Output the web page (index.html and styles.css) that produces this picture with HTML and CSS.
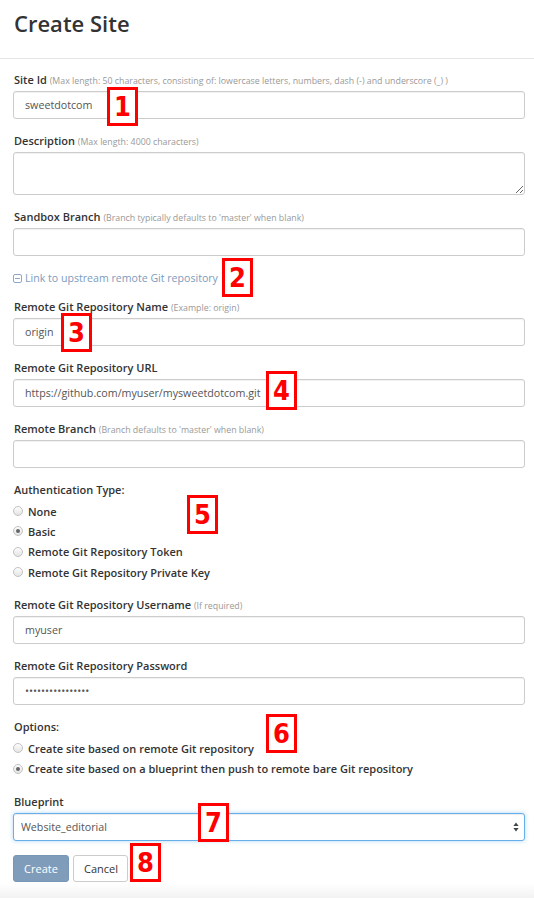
FILE: index.html
```html
<!DOCTYPE html>
<html>
<head>
<meta charset="utf-8">
<link rel="stylesheet" href="styles.css">
</head>
<body>
<div class="page">
  <header class="header"><h1 class="title">Create Site</h1></header>
  <form class="form">
    <div class="field">
      <div class="label">Site Id <span class="hint">(Max length: 50 characters, consisting of: lowercase letters, numbers, dash (-) and underscore (_) )</span></div>
      <input class="input" type="text" value="sweetdotcom">
    </div>
    <div class="field">
      <div class="label">Description <span class="hint">(Max length: 4000 characters)</span></div>
      <textarea class="input textarea"></textarea>
    </div>
    <div class="field">
      <div class="label">Sandbox Branch <span class="hint">(Branch typically defaults to 'master' when blank)</span></div>
      <input class="input" type="text" value="">
    </div>
    <div class="link-row">
      <svg class="link-icon" width="9" height="9" viewBox="0 0 9 9"><rect x="0.5" y="0.5" width="8" height="8" rx="1.5" fill="none" stroke="currentColor"/><line x1="2" y1="4.5" x2="7" y2="4.5" stroke="currentColor"/></svg>
      <span>Link to upstream remote Git repository</span>
    </div>
    <div class="field">
      <div class="label">Remote Git Repository Name <span class="hint">(Example: origin)</span></div>
      <input class="input" type="text" value="origin">
    </div>
    <div class="field">
      <div class="label">Remote Git Repository URL</div>
      <input class="input" type="text" value="https://github.com/myuser/mysweetdotcom.git">
    </div>
    <div class="field">
      <div class="label">Remote Branch <span class="hint">(Branch defaults to 'master' when blank)</span></div>
      <input class="input" type="text" value="">
    </div>
    <div class="field field-radios">
      <div class="label">Authentication Type:</div>
      <div class="radios">
        <label class="radio"><input type="radio" name="auth"><span>None</span></label>
        <label class="radio"><input type="radio" name="auth" checked><span>Basic</span></label>
        <label class="radio"><input type="radio" name="auth"><span>Remote Git Repository Token</span></label>
        <label class="radio"><input type="radio" name="auth"><span>Remote Git Repository Private Key</span></label>
      </div>
    </div>
    <div class="field">
      <div class="label">Remote Git Repository Username <span class="hint">(If required)</span></div>
      <input class="input" type="text" value="myuser">
    </div>
    <div class="field">
      <div class="label">Remote Git Repository Password</div>
      <input class="input" type="password" value="abcdefghijklmnop">
    </div>
    <div class="field field-radios">
      <div class="label">Options:</div>
      <div class="radios">
        <label class="radio"><input type="radio" name="opt"><span>Create site based on remote Git repository</span></label>
        <label class="radio"><input type="radio" name="opt" checked><span>Create site based on a blueprint then push to remote bare Git repository</span></label>
      </div>
    </div>
    <div class="field">
      <div class="label">Blueprint</div>
      <div class="select-wrap">
        <select class="input select"><option>Website_editorial</option></select>
        <svg class="select-arrows" width="6" height="10" viewBox="0 0 6 10"><path d="M3 0.5 L5.6 4 H0.4 Z M3 9.5 L5.6 6 H0.4 Z" fill="#444"/></svg>
      </div>
    </div>
    <div class="actions">
      <button type="button" class="btn btn-primary">Create</button>
      <button type="button" class="btn btn-default">Cancel</button>
    </div>
  </form>

  <div class="badge b1">1</div>
  <div class="badge b2">2</div>
  <div class="badge b3">3</div>
  <div class="badge b4">4</div>
  <div class="badge b5">5</div>
  <div class="badge b6">6</div>
  <div class="badge b7">7</div>
  <div class="badge b8">8</div>
</div>
</body>
</html>
```
FILE: styles.css
```css
* { box-sizing: border-box; }
html, body { margin: 0; padding: 0; background: #fff; }
body {
  font-family: "Open Sans", "Liberation Sans", sans-serif;
  color: #333;
  width: 534px;
  height: 898px;
  overflow: hidden;
}
.page { position: relative; width: 534px; height: 898px; }

.header {
  height: 59px;
  border-bottom: 1px solid #e5e5e5;
  padding: 8px 14px 0;
}
.title {
  margin: 0;
  font-size: 22px;
  line-height: 30px;
  font-weight: 600;
  color: #333;
}

.form { padding: 13px 9px 0 13px; }

.field { margin-bottom: 14px; }
.field-radios { margin-bottom: 15px; }

.label {
  height: 16px;
  font-size: 11px;
  line-height: 16px;
  font-weight: 600;
  color: #333;
  margin: 0 0 3px 1px;
  white-space: nowrap;
}
.hint {
  font-size: 8.8px;
  line-height: 1;
  font-weight: 400;
  color: #999;
}

.input {
  display: block;
  width: 512px;
  height: 28px;
  margin: 0;
  padding: 0 10px 0 11px;
  border: 1px solid #ccc;
  border-radius: 3px;
  background: #fff;
  font-family: "Open Sans", "Liberation Sans", sans-serif;
  font-size: 10.7px;
  color: #555;
  box-shadow: inset 0 1px 1px rgba(0,0,0,0.06);
  outline: none;
}
.textarea { height: 43px; resize: vertical; padding-top: 5px; }

.link-row {
  display: flex;
  align-items: center;
  gap: 3px;
  height: 16px;
  margin-bottom: 13px;
  font-size: 10.6px;
  color: #7d9bbd;
}
.link-icon { color: #8ea7c4; flex: none; }

.radios { display: flex; flex-direction: column; margin-top: 2px; }
.radio {
  display: flex;
  align-items: center;
  gap: 5px;
  height: 20.3px;
  font-size: 11px;
  font-weight: 600;
  color: #333;
}
.radio input {
  appearance: none;
  -webkit-appearance: none;
  margin: 0;
  width: 10px;
  height: 10px;
  border: 1px solid #c2c2c2;
  border-radius: 50%;
  background: linear-gradient(#fdfdfd, #e4e4e4);
  flex: none;
  display: grid;
  place-items: center;
}
.radio input:checked::after {
  content: "";
  width: 4px;
  height: 4px;
  border-radius: 50%;
  background: #666;
}

.select-wrap { position: relative; width: 512px; }
.select {
  appearance: none;
  -webkit-appearance: none;
  height: 28px;
  padding-left: 7px;
  border-color: #66afe9;
  box-shadow: inset 0 1px 1px rgba(0,0,0,0.075), 0 0 4px rgba(102,175,233,0.5);
}
.select-arrows { position: absolute; right: 6px; top: 9px; }

.actions {
  display: flex;
  gap: 4px;
  height: 47px;
  margin: 0 -9px 0 -13px;
  padding-left: 13px;
  background: linear-gradient(#fff 0, #fff 60%, #efefef 100%);
}
.btn {
  height: 27px;
  padding: 0 10px;
  border-radius: 3px;
  font-family: "Open Sans", "Liberation Sans", sans-serif;
  font-size: 11px;
  line-height: 25px;
  cursor: pointer;
}
.btn-primary {
  width: 56px;
  background: #7f9cbb;
  border: 1px solid #7896b6;
  color: #fff;
}
.btn-default {
  width: 55px;
  background: #fff;
  border: 1px solid #ccc;
  color: #333;
}

.badge {
  position: absolute;
  width: 31px;
  height: 39px;
  border: 3px solid #ff0000;
  background: #fff;
  color: #ff0000;
  font-family: "DejaVu Sans Condensed", "DejaVu Sans", sans-serif;
  font-stretch: condensed;
  font-size: 27px;
  font-weight: 700;
  line-height: 33px;
  text-align: center;
}
.b1 { left: 107px; top: 87px; }
.b2 { left: 222px; top: 258px; }
.b3 { left: 61px; top: 313px; }
.b4 { left: 266px; top: 371px; }
.b5 { left: 187px; top: 495px; }
.b6 { left: 266px; top: 714px; }
.b7 { left: 198px; top: 803px; }
.b8 { left: 130px; top: 843px; }
```
